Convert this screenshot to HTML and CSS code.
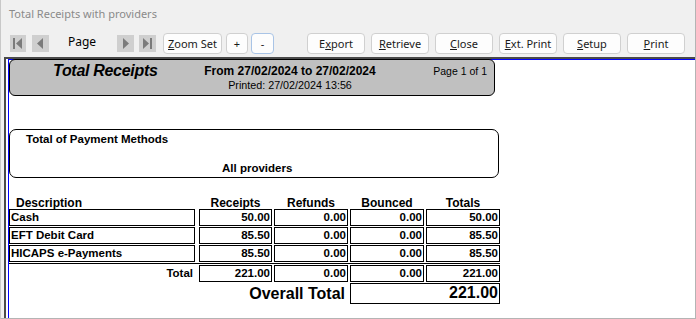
FILE: index.html
```html
<!DOCTYPE html>
<html lang="en">
<head>
  <meta charset="UTF-8" />
  <title>Total Receipts with providers</title>
  <link rel="stylesheet" href="styles.css">
</head>
<body>
  <div class="window">
    <div class="titlebar">Total Receipts with providers</div>

    <div class="toolbar">
      <span class="nav nav-first">
        <svg width="16" height="17" viewBox="0 0 16 17"><rect width="16" height="17" fill="#cfcfcf"/><rect x="3" y="3" width="2" height="11" fill="#7b7b7b"/><polygon points="12,3 12,14 6,8.5" fill="#7b7b7b"/></svg>
      </span>
      <span class="nav nav-prev">
        <svg width="17" height="17" viewBox="0 0 17 17"><rect width="17" height="17" fill="#cfcfcf"/><polygon points="11,3 11,14 5,8.5" fill="#7b7b7b"/></svg>
      </span>
      <span class="page-label">Page</span>
      <span class="nav nav-next">
        <svg width="17" height="17" viewBox="0 0 17 17"><rect width="17" height="17" fill="#cfcfcf"/><polygon points="6,3 6,14 12,8.5" fill="#7b7b7b"/></svg>
      </span>
      <span class="nav nav-last">
        <svg width="17" height="17" viewBox="0 0 17 17"><rect width="17" height="17" fill="#cfcfcf"/><polygon points="4,3 4,14 10,8.5" fill="#7b7b7b"/><rect x="11" y="3" width="2" height="11" fill="#7b7b7b"/></svg>
      </span>
      <button class="btn btn-zoom"><u>Z</u>oom Set</button>
      <button class="btn btn-plus">+</button>
      <button class="btn btn-minus">-</button>
      <button class="btn btn-cmd btn-export">E<u>x</u>port</button>
      <button class="btn btn-cmd"><u>R</u>etrieve</button>
      <button class="btn btn-cmd"><u>C</u>lose</button>
      <button class="btn btn-cmd"><u>E</u>xt. Print</button>
      <button class="btn btn-cmd"><u>S</u>etup</button>
      <button class="btn btn-cmd"><u>P</u>rint</button>
    </div>

    <div class="viewer">
      <div class="page">

        <div class="report-head">
          <div class="report-title">Total Receipts</div>
          <div class="report-dates">
            <div class="date-range">From 27/02/2024 to 27/02/2024</div>
            <div class="printed">Printed: 27/02/2024 13:56</div>
          </div>
          <div class="page-count">Page 1 of 1</div>
        </div>

        <div class="group-box">
          <div class="group-title">Total of Payment Methods</div>
          <div class="group-sub">All providers</div>
        </div>

        <div class="totals-grid">
          <div class="col-head col-desc">Description</div>
          <div class="col-head">Receipts</div>
          <div class="col-head">Refunds</div>
          <div class="col-head">Bounced</div>
          <div class="col-head">Totals</div>

          <div class="cell desc">Cash</div>
          <div class="cell">50.00</div>
          <div class="cell">0.00</div>
          <div class="cell">0.00</div>
          <div class="cell">50.00</div>

          <div class="cell desc">EFT Debit Card</div>
          <div class="cell">85.50</div>
          <div class="cell">0.00</div>
          <div class="cell">0.00</div>
          <div class="cell">85.50</div>

          <div class="cell desc">HICAPS e-Payments</div>
          <div class="cell">85.50</div>
          <div class="cell">0.00</div>
          <div class="cell">0.00</div>
          <div class="cell">85.50</div>

          <div class="rule"></div>

          <div class="total-label">Total</div>
          <div class="cell">221.00</div>
          <div class="cell">0.00</div>
          <div class="cell">0.00</div>
          <div class="cell">221.00</div>

          <div class="overall-label">Overall Total</div>
          <div class="overall-value">221.00</div>
        </div>

      </div>
    </div>
  </div>
</body>
</html>
```

FILE: styles.css
```css
body {
  margin: 0;
  background: #ffffff;
  font-family: "Noto Sans", "Open Sans", sans-serif;
}

.window {
  width: 696px;
  height: 319px;
  box-sizing: border-box;
  border-left: 1px solid #c8c8c8;
  border-right: 1px solid #b4b4b4;
  border-bottom: 1px solid #b4b4b4;
  background: #f0f0f0;
  display: flex;
  flex-direction: column;
}

.titlebar {
  height: 30px;
  box-sizing: border-box;
  padding: 6px 0 0 8px;
  font-size: 11px;
  line-height: 16px;
  color: #8a8a8a;
}

/* toolbar */
.toolbar {
  height: 27px;
  box-sizing: border-box;
  padding: 3px 0 0 9px;
  display: flex;
  align-items: flex-start;
}

.nav {
  margin-top: 2px;
  height: 17px;
}

.nav svg { display: block; }

.nav-prev { margin-left: 6px; }
.nav-last { margin-left: 5px; }

.page-label {
  width: 49px;
  padding-left: 19px;
  font-size: 12px;
  line-height: 17px;
  margin-top: 0;
  color: #000;
}

.btn {
  height: 21px;
  box-sizing: border-box;
  padding: 0;
  border: 1px solid #d0d0d0;
  border-radius: 4px;
  background: #fdfdfd;
  font-family: "Noto Sans", "Open Sans", sans-serif;
  font-size: 11px;
  line-height: 19px;
  color: #1a1a1a;
  text-align: center;
}

.btn u { text-underline-offset: 1px; }

.btn-zoom { width: 59px; margin-left: 7px; }
.btn-plus { width: 22px; margin-left: 4px; }
.btn-minus { width: 23px; margin-left: 3px; border-color: #a9c4e6; }
.btn-cmd { width: 58px; margin-left: 6px; }
.btn-export { margin-left: 33px; }

/* report viewer */
.viewer {
  flex: 1;
  margin-left: 3px;
  border-left: 2px solid #4a4a4a;
  border-top: 2px solid #4a4a4a;
  padding-left: 2px;
  background: #ffffff;
  display: flex;
  min-height: 0;
}

.page {
  flex: 1;
  border-left: 1px solid #0000ff;
  border-top: 1px solid #0000ff;
  font-family: "Liberation Sans", Arial, sans-serif;
  color: #000;
}

.report-head {
  width: 486px;
  height: 37px;
  box-sizing: border-box;
  margin-top: -1px;
  border: 1px solid #000;
  border-radius: 6px;
  background: #c0c0c0;
  display: flex;
  align-items: flex-start;
}

.report-title {
  width: 117px;
  padding-left: 43px;
  margin-top: 1px;
  font-size: 16px;
  line-height: 20px;
  font-weight: bold;
  font-style: italic;
  letter-spacing: -0.3px;
}

.report-dates {
  width: 240px;
  margin-top: 4px;
  text-align: center;
}

.date-range {
  font-size: 12px;
  line-height: 14px;
  font-weight: bold;
}

.printed {
  font-size: 10.75px;
  line-height: 14px;
}

.page-count {
  margin-left: auto;
  padding-right: 7px;
  margin-top: 4px;
  font-size: 10.5px;
  line-height: 14px;
}

.group-box {
  width: 490px;
  height: 49px;
  box-sizing: border-box;
  margin-top: 33px;
  border: 1px solid #000;
  border-radius: 7px;
  padding: 2px 0 0 16px;
  font-size: 11.5px;
  line-height: 14px;
  font-weight: bold;
}

.group-sub {
  margin-top: 15px;
  padding-left: 196px;
}

/* payment methods table */
.totals-grid {
  margin-top: 19px;
  display: grid;
  grid-template-columns: 188px 73px 74px 74px 74px;
  grid-template-rows: 11px 17px 17px 17px 1px 17px 21px;
  column-gap: 2px;
  row-gap: 1px;
  font-weight: bold;
}

.col-head {
  font-size: 12px;
  line-height: 12px;
  text-align: center;
  white-space: nowrap;
}

.col-head.col-desc {
  text-align: left;
  padding-left: 7px;
}

.cell {
  border: 1px solid #000;
  box-sizing: border-box;
  padding: 0 1px;
  font-size: 11.5px;
  line-height: 15px;
  text-align: right;
  white-space: nowrap;
}

.cell.desc {
  width: 186px;
  text-align: left;
}

.rule {
  grid-column: 1 / -1;
  background: #000;
}

.total-label {
  padding-right: 4px;
  font-size: 11.5px;
  line-height: 17px;
  text-align: right;
}

.overall-label {
  grid-column: 1 / 4;
  padding-right: 3px;
  font-size: 16px;
  line-height: 21px;
  text-align: right;
}

.overall-value {
  grid-column: 4 / 6;
  border: 1px solid #000;
  box-sizing: border-box;
  padding-right: 1px;
  font-size: 16px;
  line-height: 17px;
  text-align: right;
}
```
